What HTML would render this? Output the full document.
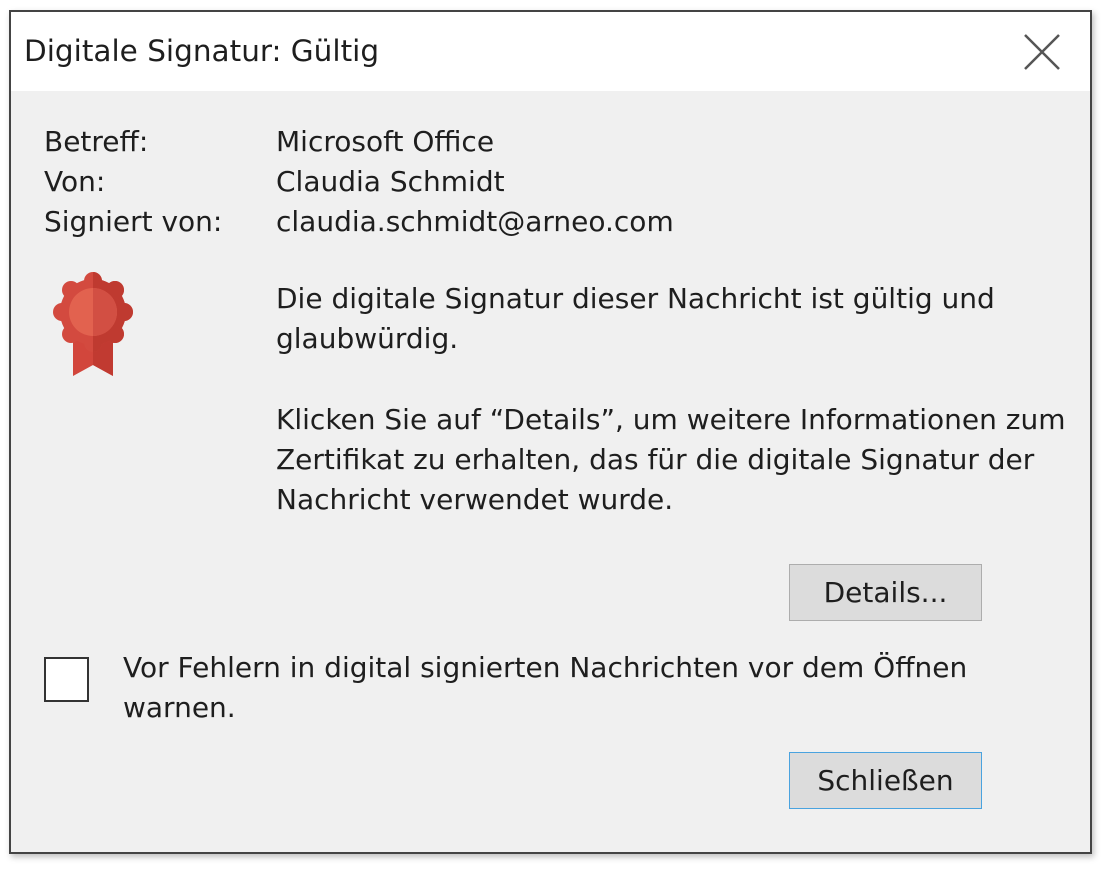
<!DOCTYPE html>
<html><head><meta charset="utf-8"><style>
body{margin:0;width:1108px;height:872px;background:#fff;position:relative;overflow:hidden;font-family:"DejaVu Sans","Liberation Sans",sans-serif;color:#1e1e1e;font-size:28px}
.dlg{position:absolute;left:9px;top:10px;width:1079px;height:840px;border:2px solid #444;background:#f0f0f0;box-shadow:2px 3px 6px rgba(0,0,0,.25)}
.tb{position:absolute;left:0;top:0;right:0;height:79px;background:#fff}
.t{position:absolute;white-space:nowrap;line-height:40px}
.btn{position:absolute;width:191px;height:55px;background:#dcdcdc;border:1px solid #adadad;text-align:center;line-height:55px}
</style></head><body>
<div class="dlg">
<div class="tb"></div>
</div>
<div class="t" style="left:24px;top:31px;font-size:29.5px">Digitale Signatur: Gültig</div>
<svg style="position:absolute;left:1022px;top:32px" width="40" height="40"><path d="M3 3L37 37M37 3L3 37" stroke="#555" stroke-width="2.5"/></svg>
<div class="t" style="left:44px;top:122px">Betreff:<br>Von:<br>Signiert von:</div>
<div class="t" style="left:276px;top:122px">Microsoft Office<br>Claudia Schmidt<br>claudia.schmidt@arneo.com</div>
<svg style="position:absolute;left:50px;top:272px" width="90" height="108">
<defs><clipPath id="r"><rect x="43" y="0" width="50" height="90"/></clipPath></defs>
<path d="M23 55L23 104L43 93L63 104L63 55Z" fill="#d2463c"/>
<path d="M43 55L43 93L63 104L63 55Z" fill="#c13a31"/>
<g id="ro" fill="#d34a3f">
<circle cx="43" cy="40" r="33"/>
<circle cx="43" cy="9" r="9"/><circle cx="65" cy="18" r="9"/><circle cx="74" cy="40" r="9"/><circle cx="65" cy="62" r="9"/><circle cx="43" cy="71" r="9"/><circle cx="21" cy="62" r="9"/><circle cx="12" cy="40" r="9"/><circle cx="21" cy="18" r="9"/>
</g>
<g clip-path="url(#r)" fill="#bf3a30">
<circle cx="43" cy="40" r="33"/>
<circle cx="43" cy="9" r="9"/><circle cx="65" cy="18" r="9"/><circle cx="74" cy="40" r="9"/><circle cx="65" cy="62" r="9"/><circle cx="43" cy="71" r="9"/>
</g>
<circle cx="43" cy="40" r="24" fill="#e2624f"/>
<path d="M43 16A24 24 0 0 1 43 64Z" fill="#d24f43"/>
</svg>
<div class="t" style="left:276px;top:279px">Die digitale Signatur dieser Nachricht ist gültig und<br>glaubwürdig.</div>
<div class="t" style="left:276px;top:400px">Klicken Sie auf “Details”, um weitere Informationen zum<br>Zertifikat zu erhalten, das für die digitale Signatur der<br>Nachricht verwendet wurde.</div>
<div class="btn" style="left:789px;top:564px">Details...</div>
<div style="position:absolute;left:44px;top:657px;width:41px;height:41px;border:2px solid #333;background:#fff"></div>
<div class="t" style="left:123px;top:648px">Vor Fehlern in digital signierten Nachrichten vor dem Öffnen<br>warnen.</div>
<div class="btn" style="left:789px;top:752px;border:1px solid #4aa3df">Schließen</div>
</body></html>
